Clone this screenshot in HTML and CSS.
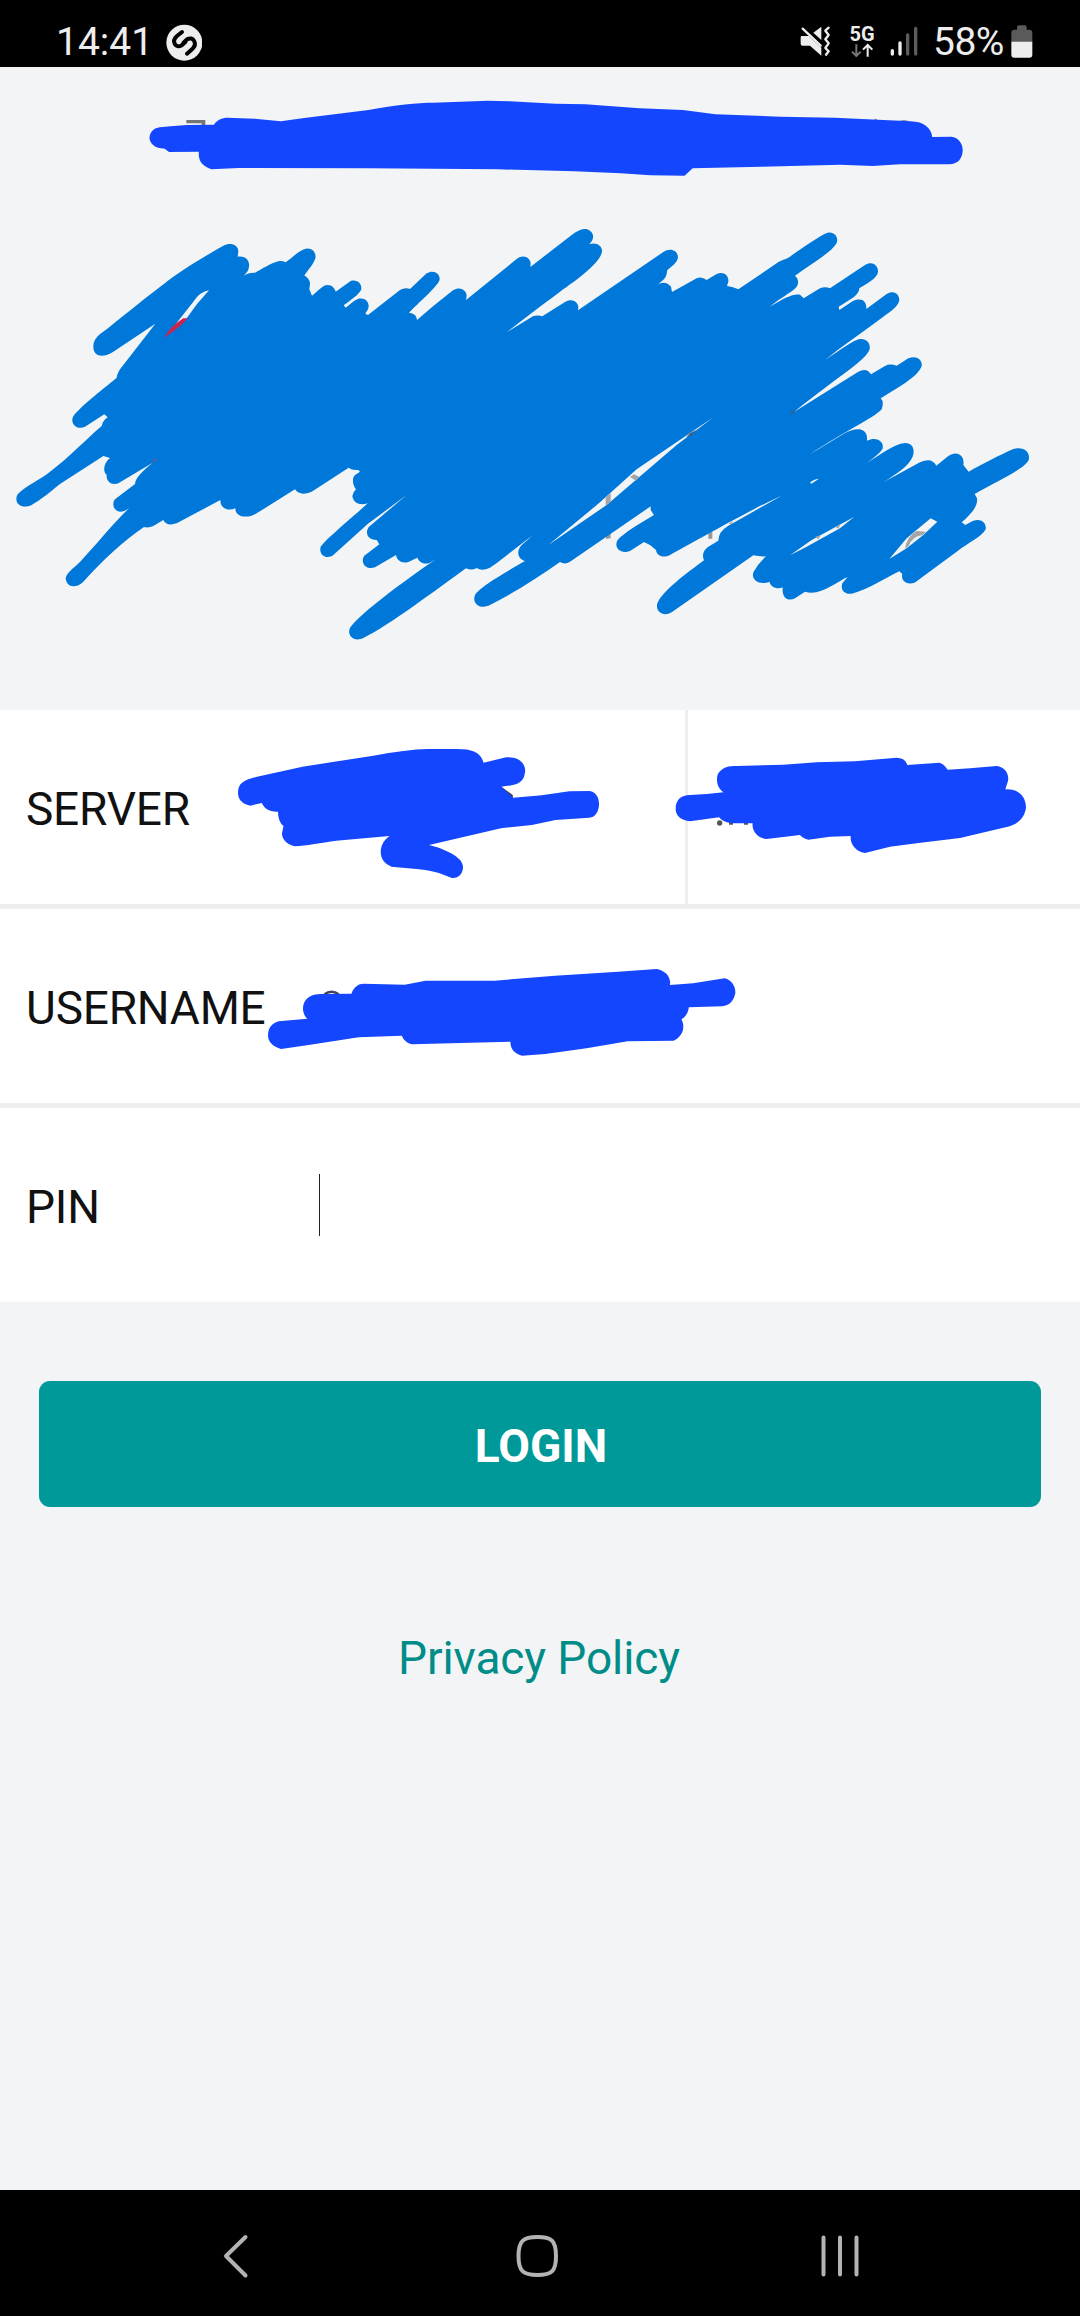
FILE: index.html
```html
<!DOCTYPE html>
<html lang="en">
<head>
<meta charset="utf-8">
<title>Login</title>
<link rel="stylesheet" href="styles.css">
</head>
<body>
<div class="screen">
  <header class="status">
    <div class="status-left">
      <span class="clock">14:41</span>
      <svg class="shazam" width="36" height="37" viewBox="498 71 108 111"><circle cx="553" cy="127" r="54" fill="#ededed"/><path d="M546 95 L531 107 C513 123 527 146 545 135 L556 125 M561 160 L576 147 C594 130 580 106 561 117 L550 128" fill="none" stroke="#000" stroke-width="12" stroke-linecap="round"/></svg>
    </div>
    <div class="status-right">
      <svg class="mute" width="31" height="31" viewBox="122 78 93 93"><path d="M124 112 Q124 108 128 108 H149 L186 143 V167 L152 137 H130 Q124 137 124 131Z M162 98 L186 80 V120Z" fill="#ededed"/><path d="M130 86 L184 137" stroke="#ededed" stroke-width="7" stroke-linecap="round"/><path d="M208 83 L198 92 L208 105 L198 118 L208 130 L198 144 L208 154 L200 164" fill="none" stroke="#ededed" stroke-width="7" stroke-linejoin="round" stroke-linecap="round"/></svg>
      <div class="network">
        <span class="network-label">5G</span>
        <svg width="24" height="14" viewBox="270 130 72 42"><path d="M289 134 V169 M276 156 L289 169 L302 156" fill="none" stroke="#777" stroke-width="6"/><path d="M323 171 V136 M309 150 L323 136 L337 150" fill="none" stroke="#ededed" stroke-width="6"/></svg>
      </div>
      <svg class="signal" width="28" height="30" viewBox="390 79 84 90"><g stroke-width="10" stroke-linecap="round"><path d="M397 153 V163 M420 130 V163" stroke="#ededed"/><path d="M443 106 V163 M467 86 V163" stroke="#5c5c5c"/></g></svg>
      <span class="percent">58%</span>
      <svg class="battery" width="22" height="33" viewBox="752 76 66 99"><path d="M753 127 V99 Q753 90 762 90 H770 V83 Q770 77 776 77 H793 Q799 77 799 83 V90 H807 Q816 90 816 99 V127Z" fill="#5a5a5a"/><path d="M753 126 H816 V165 Q816 174 807 174 H762 Q753 174 753 165Z" fill="#ededed"/></svg>
    </div>
  </header>

  <main class="content">
    <section class="hero">
      <svg class="title-mark" width="850" height="110" viewBox="0 0 1568 330" preserveAspectRatio="none">
        <path d="M104 120H139V137H132V130H104Z M1370 122L1376 116L1380 122Z M1418 124Q1428 117 1438 124Z" fill="#777"/>
        <path d="M36 175 C36 155 45 144 55 142 L75 139 L105 135 L155 134 C160 120 170 113 180 113 L230 116 L278 124 L325 113 L440 90 C490 75 530 68 560 68 L660 62 L700 64 L785 71 L840 73 L940 85 L1020 90 L1080 103 L1200 110 L1300 113 L1440 124 C1465 125 1478 145 1480 171 L1515 170 C1530 172 1537 195 1536 213 C1535 240 1525 252 1512 253 L1420 253 L1370 258 L1310 254 L1165 260 L1038 265 L1023 287 L960 286 L905 280 L820 274 L680 268 L440 265 L200 264 L150 268 C130 255 126 240 127 215 L72 216 L64 206 C45 206 37 190 36 175Z" fill="#1446ff"/>
      </svg>
      <svg class="logo-mark" width="1080" height="450" viewBox="0 0 3240 1350">
        <g fill="#999"><path d="M1818 965L1832 965V985L1818 987Z M2125 968L2137 962V986H2125Z"/></g>
        <path fill="#0078d9" d="M280 410 C280 385 300 372 320 358 C390 300 480 230 520 200 C570 165 630 130 670 107 C690 97 715 103 715 125 L713 140 C735 137 750 150 747 170 C745 185 737 190 731 197 Q745 187 765 188 C785 178 810 160 838 153 Q848 152 857 157 C880 140 895 125 912 118 C932 110 950 125 946 145 C942 160 925 180 913 196 Q930 207 930 222 L928 238 L936 257 C950 245 960 235 972 227 C990 220 1003 230 1007 245 L1052 213 C1072 207 1086 222 1084 238 C1080 252 1050 272 1031 286 L1037 293 C1050 283 1060 272 1075 266 C1095 262 1107 275 1106 290 C1105 300 1098 305 1096 311 L1104 315
        L1200 240 Q1215 232 1230 237 L1280 190 C1300 178 1320 190 1319 208 C1317 225 1270 265 1227 308 Q1250 310 1251 330 L1300 288 L1360 240 C1380 228 1400 240 1400 258 L1398 270 L1550 147 C1570 132 1590 142 1592 160 L1591 171 L1715 75 C1735 60 1750 55 1762 58 C1780 65 1783 80 1776 92 L1768 103 C1790 95 1808 110 1806 125 C1800 160 1730 210 1680 245 C1620 290 1560 335 1520 367 L1600 318 Q1615 314 1627 319 L1695 276 C1715 263 1735 275 1735 292 L1734 301 L1990 126 C2010 113 2033 120 2034 142 C2032 160 2010 172 2001 182 C2002 205 1985 215 1965 228 C1985 215 2000 215 2013 230 L2016 246
        L2090 205 Q2105 198 2120 210 L2150 192 C2170 183 2187 195 2185 215 L2181 228 Q2200 230 2215 238 L2330 160 C2345 148 2355 150 2370 140 C2410 110 2450 85 2475 71 C2500 60 2515 80 2511 95 C2505 120 2430 165 2385 197 C2400 210 2396 230 2380 240 C2360 255 2330 272 2310 290 C2350 265 2380 250 2400 254 L2411 265 L2460 235 Q2475 228 2490 235 L2595 165 C2615 152 2635 165 2634 185 C2632 205 2600 220 2578 235 C2578 255 2550 270 2516 290 L2518 300 L2560 272 C2585 262 2600 272 2599 297 L2660 252 C2680 240 2697 250 2698 270 C2695 290 2670 305 2650 320 C2590 365 2530 405 2475 450 C2520 420 2560 390 2580 387 C2600 385 2612 400 2609 417 C2600 450 2520 495 2383 605 L2575 485 Q2600 472 2613 493 L2655 468 Q2670 460 2690 467 L2725 445 C2750 435 2768 450 2765 468 C2755 500 2690 535 2642 565 Q2653 575 2645 598 C2620 625 2540 660 2430 733 L2530 672 C2560 655 2595 648 2601 680 V692 C2630 678 2655 695 2647 718 Q2640 730 2600 760 C2640 735 2680 702 2715 699 C2740 700 2745 720 2738 740 C2725 770 2690 790 2650 817 L2760 757 Q2795 740 2809 767 L2845 738 C2870 720 2895 735 2890 765 L2906 785 C2950 760 3000 735 3040 717 C3075 708 3092 730 3086 750 C3075 775 3000 810 2924 852 L2931 865 C2935 890 2910 915 2885 937 L2896 945 L2918 933 C2945 922 2960 940 2957 958 C2945 980 2910 995 2870 1025 L2755 1110 C2735 1130 2700 1120 2707 1092 L2698 1084 C2660 1102 2600 1140 2560 1150 C2535 1157 2520 1140 2527 1120 L2543 1101 C2510 1115 2460 1160 2415 1145 L2385 1165 C2365 1175 2345 1165 2348 1132 C2330 1140 2312 1130 2308 1115 C2280 1128 2250 1110 2261 1085 Q2275 1060 2298 1039 Q2278 1040 2260 1036 L2015 1207 C1990 1222 1965 1205 1972 1180 C1990 1140 2060 1090 2112 1051 C2105 1035 2110 1020 2125 1010 L2155 992 Q2155 965 2185 947 L2345 857 C2260 895 2100 985 2010 1035 C1990 1045 1970 1038 1968 1020 L1950 1005 L1932 996 L1890 1023 C1860 1035 1840 1010 1853 990 C1870 970 1920 940 1962 915 L1952 900 V889
        L1710 1055 Q1695 1065 1680 1056 C1610 1105 1540 1150 1470 1185 C1440 1200 1415 1180 1425 1155 C1440 1130 1520 1085 1575 1053 C1550 1045 1550 1020 1565 1005 L1597 977 C1550 1010 1500 1055 1470 1073 Q1445 1085 1430 1074 Q1415 1083 1398 1075 C1300 1145 1170 1245 1090 1284 C1060 1298 1040 1275 1050 1253 C1080 1210 1230 1100 1308 1048 L1290 1058 C1275 1065 1258 1058 1252 1043 L1225 1056 C1205 1062 1190 1050 1188 1035 L1125 1072 C1095 1082 1080 1055 1093 1037 L1138 1003 L1130 990 C1100 990 1095 965 1107 950 L1220 855 L1103 942 L1000 1035 C980 1050 955 1035 962 1010 C980 985 1060 920 1103 880 C1080 887 1060 880 1057 858 Q1060 845 1068 838 C1058 825 1055 805 1065 795 L1080 785 L1075 780 Q1055 782 1046 773
        L935 845 Q900 860 885 838 L770 910 C740 928 705 920 706 895 C685 905 660 895 661 870 L530 940 Q500 950 490 930 L460 948 Q445 955 432 951 Q345 1010 250 1115 C230 1135 200 1135 197 1105 C200 1085 230 1070 250 1045 C300 990 340 940 388 894 Q375 905 360 905 C340 903 335 880 345 868 L405 822 Q405 800 458 758 L355 820 C335 827 318 815 320 795 C308 785 310 760 330 744 L310 738 L180 822 C140 855 120 870 95 885 C60 900 40 875 53 853 C80 825 120 810 150 785 C210 740 250 695 305 648 Q308 632 323 622 L313 613 L255 650 C230 662 210 640 219 620 C240 590 300 545 350 503 Q352 485 370 465 L466 341 L340 425 C310 445 280 440 280 410Z"/>
        <g fill="#f2f4f6"><path d="M627 241Q600 245 580 275L525 345L560 325Q590 280 627 241Z M1645 1005L1800 877L1910 778L2140 622L2030 705L1820 885Z M2430 818Q2440 808 2457 806L2434 821Z M2370 1036L2435 990L2562 921L2520 955L2420 1010Z M2668 1047L2720 985L2792 925L2812 935L2770 975L2720 1015Z"/></g>
        <path d="M492 383Q510 350 550 325H563Q545 350 492 383Z" fill="#cc2350"/><path d="M455 760L463 748L474 747Z" fill="#80509a"/>
        <path d="M1817 862L1832 849V875L1817 887Z M1890 801L1902 793L1918 801L1908 812Z M2185 943L2197 933V941Z M2446 980L2462 976L2455 988Z M2507 951L2522 941L2515 956Z M2715 1016Q2720 980 2750 963L2778 965L2768 975Q2735 980 2727 1007Z" fill="#a5a5a5"/><path d="M2058 682L2070 670L2089 659L2075 675Z M2368 612L2385 598L2380 610Z" fill="#45576b"/>
      </svg>
    </section>

    <form class="fields">
      <div class="row">
        <span class="label">SERVER</span>
        <span class="server-divider"></span>
        <svg class="redaction" width="1080" height="194" viewBox="0 0 1080 194">
          <g transform="translate(0 -10) scale(.39541 .33333)"><path d="M1268 260L1297 285V295L1260 293Z" fill="#444"/><path d="M602 278C602 250 615 240 650 230L765 200L940 168Q1030 148 1080 147H1140C1185 145 1215 150 1223 188L1275 173C1310 167 1330 190 1328 215C1325 250 1305 256 1268 260L1298 293L1370 286L1440 274L1492 273C1510 278 1515 295 1515 315C1513 338 1505 352 1490 353L1405 360L1345 375L1270 384L1085 435C1120 445 1172 470 1171 502C1170 525 1157 536 1143 534C1120 525 1105 513 1060 508L990 500C970 490 962 475 963 450Q965 425 985 408L850 422C800 430 780 437 745 439C722 432 713 415 713 400L717 378Q703 365 703 335C680 336 668 325 662 309L633 317C610 310 602 297 602 278Z" fill="#1446ff"/></g>
          <g transform="translate(600 -10) scale(.33333)"><circle cx="359" cy="369" r="8" fill="#555"/><path d="M387 367H399V374H387Z M432 368H444V374H432Z" fill="#555"/><path d="M227 326C227 300 243 285 270 285L320 282L371 277C350 265 347 235 355 220C370 200 385 198 410 198L550 194L650 187L765 184L890 173Q915 173 922 195L1018 188Q1030 190 1043 209L1110 205L1190 198C1215 202 1228 220 1224 243L1216 268C1255 265 1278 290 1278 322C1275 355 1250 375 1220 381L1080 414L950 430L870 440L795 459C765 455 750 430 752 408L690 410L625 419Q605 413 600 405L500 417C470 415 455 390 458 370H395Q370 367 357 352L270 364C242 360 227 347 227 326Z" fill="#1446ff"/></g>
        </svg>
      </div>
      <div class="row">
        <span class="label">USERNAME</span>
        <svg class="redaction" width="1080" height="194" viewBox="0 0 1080 194">
          <g transform="translate(0 31) scale(.48472 .33333)"><path d="M553 287C553 260 563 250 575 244L634 236C625 225 623 205 627 190C633 170 645 162 662 162L725 161C730 140 740 131 750 131L835 134L878 122L1020 122L1145 107L1275 95L1355 87C1375 92 1385 115 1382 135L1430 130L1495 115C1510 120 1518 140 1517 160C1513 185 1505 197 1490 199L1421 202Q1420 225 1406 238C1415 265 1407 290 1390 302L1295 304L1210 325L1125 342L1077 347C1060 340 1053 325 1053 305L850 313C838 308 832 298 829 287L740 292L640 314L580 327C563 320 553 305 553 287Z" fill="#1446ff"/><path d="M670 162Q684 148 698 162" fill="none" stroke="#3c4660" stroke-width="7"/></g>
        </svg>
      </div>
      <div class="row">
        <span class="label pin-label">PIN</span>
        <span class="caret"></span>
      </div>
    </form>

    <button class="login" type="button">LOGIN</button>
    <a class="privacy">Privacy Policy</a>
  </main>

  <nav class="navbar">
    <svg class="nav-back" width="28" height="46" viewBox="222 2233 28 46"><path d="M245.500 2237L226 2256L245.500 2275.500" /></svg>
    <svg class="nav-home" width="46" height="46" viewBox="514 2233 46 46"><path d="M537.500 2237C552 2237 556 2241 556 2256S552 2275 537.500 2275S518.500 2271 518.500 2256S523 2237 537.500 2237Z"/></svg>
    <svg class="nav-recents" width="40" height="46" viewBox="820 2233 40 46"><path d="M823.500 2237.500V2274.500M840 2237.500V2274.500M856.500 2237.500V2274.500"/></svg>
  </nav>
</div>
</body>
</html>
```
FILE: styles.css
```css
* { box-sizing: border-box; }

body {
  margin: 0;
  font-family: Roboto, "Liberation Sans", sans-serif;
  background: #f2f4f6;
}

svg { display: block; flex: none; }

.screen {
  display: flex;
  flex-direction: column;
  width: 1080px;
  height: 2316px;
  overflow: hidden;
}

.status {
  display: flex;
  justify-content: space-between;
  height: 67px;
  padding: 0 47px 0 56px;
  background: #000;
  color: #ededed;
  font-size: 39px;
  line-height: 46px;
}

.status-left,
.status-right {
  display: flex;
  align-items: flex-start;
}

.clock { width: 110px; padding-top: 19px; }
.shazam { margin-top: 24px; }
.mute { margin-top: 26px; }

.network {
  display: flex;
  flex-direction: column;
  align-items: center;
  width: 26px;
  margin: 25px 0 0 18px;
}

.network-label {
  font-size: 20px;
  font-weight: 700;
  line-height: 18px;
}

.signal { margin: 26px 0 0 15px; }
.percent { width: 78px; margin-left: 15px; padding-top: 19px; letter-spacing: -0.5px; }
.battery { margin-top: 25px; }

.content {
  display: flex;
  flex: 1;
  flex-direction: column;
  align-items: center;
}

.hero {
  width: 100%;
  height: 643px;
  padding-top: 13px;
}

.title-mark { margin: 0 0 20px 130px; }

.fields {
  display: flex;
  flex-direction: column;
  gap: 5px;
  width: 100%;
  background: #eeeeee;
}

.row {
  position: relative;
  display: flex;
  align-items: center;
  height: 194px;
  padding-left: 26px;
  background: #fff;
}

.label {
  width: 293px;
  padding-top: 4px;
  color: #111;
  font-size: 46px;
  line-height: 54px;
  letter-spacing: -0.2px;
}

.server-divider {
  width: 3px;
  height: 194px;
  margin-left: 366px;
  background: #eeeeee;
}

.redaction {
  position: absolute;
  top: 0;
  left: 0;
}

.caret {
  width: 1px;
  height: 62px;
  margin-bottom: 1px;
  background: #222;
}

.login {
  width: 1002px;
  height: 126px;
  margin-top: 79px;
  padding: 4px 0 0 2px;
  border: 0;
  border-radius: 11px;
  background: #009999;
  color: #fff;
  font-family: inherit;
  font-size: 46px;
  font-weight: 700;
}

.privacy {
  margin-top: 124px;
  padding-right: 2px;
  color: #008c88;
  font-size: 46px;
  line-height: 54px;
  letter-spacing: -0.1px;
}

.navbar {
  display: flex;
  align-items: center;
  height: 126px;
  padding: 6px 0 0 222px;
  background: #000;
}

.navbar path {
  fill: none;
  stroke: #b3b3b3;
  stroke-width: 4;
  stroke-linecap: round;
  stroke-linejoin: round;
}

.nav-home { margin-left: 264px; }
.nav-recents { margin-left: 260px; }
```
